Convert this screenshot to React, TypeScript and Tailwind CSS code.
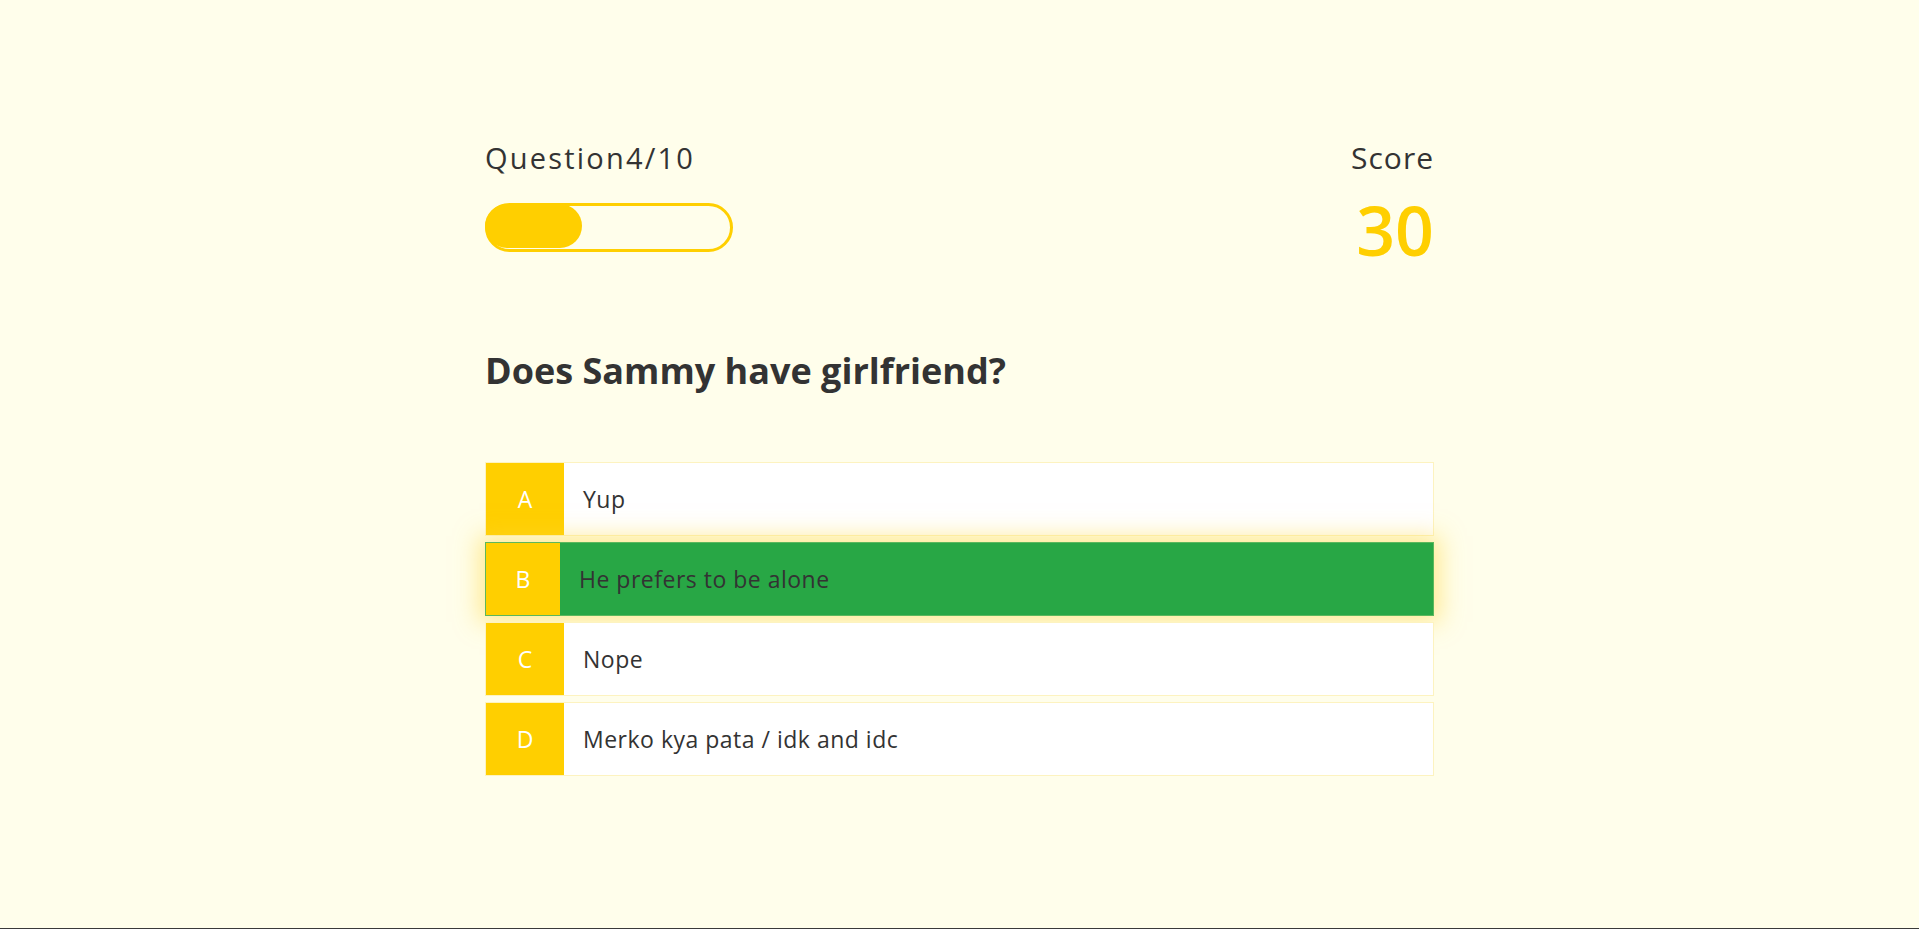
import React from "react";

const OPTIONS = [
  { letter: "A", text: "Yup" },
  { letter: "B", text: "He prefers to be alone", picked: true },
  { letter: "C", text: "Nope" },
  { letter: "D", text: "Merko kya pata / idk and idc" },
];

function Progress({ current, total }: { current: number; total: number }) {
  const pct = (current / total) * 100;
  return (
    <div className="mt-[25px] h-[49px] w-[248px] rounded-full border-[3px] border-[#ffcf00]">
      <div className="-ml-[3px] -mt-[2px] h-[44px] rounded-full bg-[#ffcf00]" style={{ width: `${pct}%` }} />
    </div>
  );
}

function Option({ letter, text, picked }: { letter: string; text: string; picked?: boolean }) {
  return (
    <div
      className={`flex h-[74px] items-stretch border ${
        picked
          ? "border-[#5cb85c] bg-[#28a745] shadow-[0_0_22px_6px_rgba(255,215,60,0.5)]"
          : "border-[#fdf3c0] bg-white"
      }`}
    >
      <div
        className={`flex shrink-0 items-center justify-center bg-[#ffcf00] text-[23px] text-white ${
          picked ? "w-[74px]" : "w-[78px]"
        }`}
      >
        {letter}
      </div>
      <div className="flex items-center pl-[19px] text-[23px] tracking-[0.5px] text-[#333]">{text}</div>
    </div>
  );
}

export default function App() {
  return (
    <div
      className="h-[929px] border-b border-[#3a3a3a] bg-[#fffeeb] text-[#333]"
      style={{ fontFamily: '"Open Sans", "DejaVu Sans", sans-serif' }}
    >
      <div className="mx-auto w-[949px] pt-[138px]">
        <div className="flex items-start justify-between">
          <div>
            <div className="text-[29px] leading-[40px] tracking-[2.2px]">Question4/10</div>
            <Progress current={4} total={10} />
          </div>
          <div className="flex flex-col items-end">
            <div className="text-[30px] leading-[40px] tracking-[1px]">Score</div>
            <div className="mt-[18px] text-[68px] font-semibold leading-[68px] text-[#ffcf00]">30</div>
          </div>
        </div>
        <h1 className="mt-[83px] text-[36px] font-bold leading-[48px]">Does Sammy have girlfriend?</h1>
        <div className="mt-[67px] flex flex-col gap-[6px]">
          {OPTIONS.map((o) => (
            <Option key={o.letter} {...o} />
          ))}
        </div>
      </div>
    </div>
  );
}
